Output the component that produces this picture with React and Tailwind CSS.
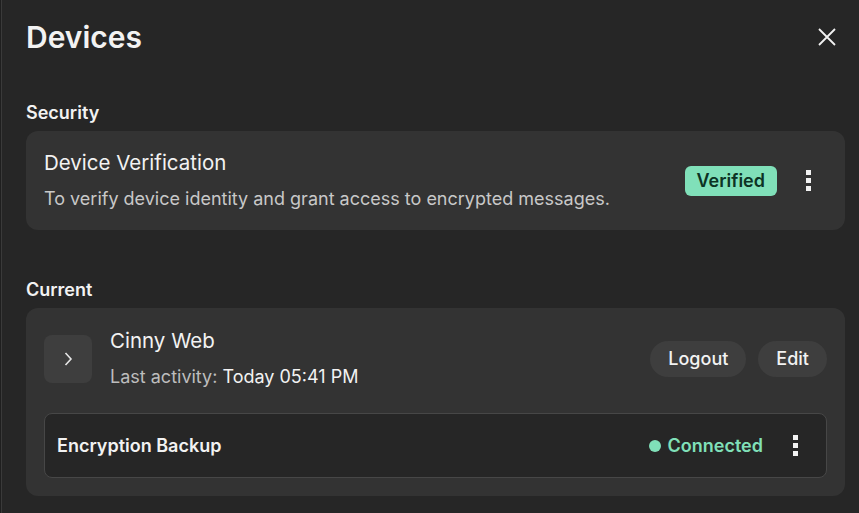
import React from 'react'

function Kebab() {
  return (
    <div className="w-9 h-9 flex flex-col items-center justify-center gap-[3px]">
      <span className="block w-[5px] h-[5px] bg-[#f2f2f2]" />
      <span className="block w-[5px] h-[5px] bg-[#f2f2f2]" />
      <span className="block w-[5px] h-[5px] bg-[#f2f2f2]" />
    </div>
  )
}

function CloseIcon() {
  return (
    <svg width="18" height="18" viewBox="0 0 18 18" fill="none">
      <path d="M1 1L17 17M17 1L1 17" stroke="#f2f2f2" strokeWidth="1.8" />
    </svg>
  )
}

function Chevron() {
  return (
    <svg width="10" height="14" viewBox="0 0 10 14" fill="none">
      <path d="M2.5 1L8 7L2.5 13" stroke="#e6e6e6" strokeWidth="1.6" />
    </svg>
  )
}

export default function App() {
  return (
    <div className="w-[859px] h-[513px] overflow-hidden bg-[#1f1f1f] pl-px">
      <div
        className="h-full bg-[#262626] border-l border-[#3a3a3a] text-[#f2f2f2]"
        style={{ fontFamily: 'Inter, "Noto Sans", sans-serif' }}
      >
        <div className="flex items-center justify-between pl-[24px] pr-[19px] h-[74px]">
          <h1 className="text-[30px] font-semibold leading-none">Devices</h1>
          <button className="p-1">
            <CloseIcon />
          </button>
        </div>

        <div className="pl-[24px] pr-[14px] pt-[27px]">
          <h2 className="text-[18px] font-semibold leading-6">Security</h2>
          <div className="mt-[6px] rounded-xl bg-[#333333] pl-[18px] pr-[19px] pt-[18px] pb-[18px] flex items-center">
            <div className="flex-1">
              <p className="text-[20.5px] leading-7">Device Verification</p>
              <p className="text-[18px] leading-[26px] mt-[9px] text-[#c8c8c8]">
                To verify device identity and grant access to encrypted messages.
              </p>
            </div>
            <span className="rounded-md bg-[#80e0b9] text-[#0c3324] text-[18px] font-semibold px-[12px] h-[30px] flex items-center mr-[13px]">
              Verified
            </span>
            <Kebab />
          </div>

          <h2 className="mt-[48px] text-[18px] font-semibold leading-6">Current</h2>
          <div className="mt-[6px] rounded-xl bg-[#333333] pt-[19px] px-[18px] pb-[18px]">
            <div className="flex items-center gap-[18px]">
              <div className="w-12 h-12 rounded-lg bg-[#3e3e3e] flex items-center justify-center">
                <Chevron />
              </div>
              <div className="flex-1">
                <p className="text-[20.5px] leading-7">Cinny Web</p>
                <p className="text-[18px] leading-[26px] mt-[9px]">
                  <span className="text-[#bdbdbd]">Last activity: </span>Today 05:41 PM
                </p>
              </div>
              <div className="flex items-center gap-3">
                <button className="h-9 px-[18px] rounded-full bg-[#3e3e3e] text-[18px] font-medium">
                  Logout
                </button>
                <button className="h-9 px-[18px] rounded-full bg-[#3e3e3e] text-[18px] font-medium">
                  Edit
                </button>
              </div>
            </div>
            <div className="mt-[23px] h-[65px] rounded-lg border border-[#474747] bg-[#262626] pl-[12px] pr-[13px] flex items-center">
              <p className="flex-1 text-[18px] font-semibold">Encryption Backup</p>
              <span className="w-[12px] h-[12px] rounded-full bg-[#80e0b9] mr-[7px]" />
              <span className="text-[18px] font-semibold text-[#80e0b9] mr-[14px]">Connected</span>
              <Kebab />
            </div>
          </div>
        </div>
      </div>
    </div>
  )
}
